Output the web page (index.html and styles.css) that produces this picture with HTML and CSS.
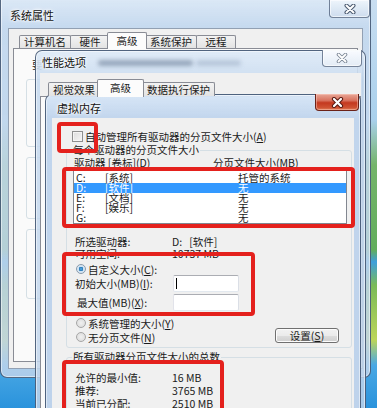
FILE: index.html
```html
<!DOCTYPE html>
<html lang="zh-CN">
<head>
    <meta charset="UTF-8">
    <meta name="viewport" content="width=device-width, initial-scale=1.0">
    <title>虚拟内存</title>
    <link rel="stylesheet" href="styles.css">
</head>
<body>
<div class="desktop">

    <!-- 系统属性 -->
    <div class="win win-sys">
        <div class="titlebar">
            <span class="title">系统属性</span>
            <span class="close close-sys">
                <svg width="12" height="10" viewBox="0 0 12 10"><path d="M2.5 1.5 L9.5 8.5 M9.5 1.5 L2.5 8.5" stroke="#4a5a70" stroke-width="4" stroke-linecap="round"/><path d="M2.5 1.5 L9.5 8.5 M9.5 1.5 L2.5 8.5" stroke="#fff" stroke-width="2" stroke-linecap="round"/></svg>
            </span>
        </div>
        <div class="client">
            <div class="tabs">
                <span class="tab">计算机名</span>
                <span class="tab">硬件</span>
                <span class="tab active">高级</span>
                <span class="tab">系统保护</span>
                <span class="tab">远程</span>
            </div>
            <div class="tab-panel">
                <p class="note">要</p>
                <div class="ghost-group g1"></div>
                <div class="ghost-group g2"></div>
                <div class="ghost-group g3"></div>
            </div>
        </div>
    </div>

    <!-- 性能选项 -->
    <div class="win win-perf">
        <div class="titlebar">
            <span class="title">性能选项</span>
            <span class="glass-blur b1"></span>
            <span class="glass-blur b2"></span>
            <span class="close close-perf">
                <svg width="12" height="10" viewBox="0 0 12 10"><path d="M2.5 1.5 L9.5 8.5 M9.5 1.5 L2.5 8.5" stroke="#7b8796" stroke-width="3.6" stroke-linecap="round"/><path d="M2.5 1.5 L9.5 8.5 M9.5 1.5 L2.5 8.5" stroke="#fff" stroke-width="1.8" stroke-linecap="round"/></svg>
            </span>
        </div>
        <div class="client">
            <div class="tabs tabs-perf">
                <span class="tab">视觉效果</span>
                <span class="tab active">高级</span>
                <span class="tab">数据执行保护</span>
            </div>
            <div class="tab-panel"></div>
        </div>
    </div>

    <!-- 虚拟内存 -->
    <div class="win win-vm">
        <div class="titlebar">
            <span class="title">虚拟内存</span>
            <span class="close close-vm">
                <svg width="13" height="11" viewBox="0 0 13 11"><path d="M3 2 L10 9 M10 2 L3 9" stroke="#5a1a12" stroke-width="4.2" stroke-linecap="round"/><path d="M3 2 L10 9 M10 2 L3 9" stroke="#fff" stroke-width="2.2" stroke-linecap="round"/></svg>
            </span>
        </div>
        <div class="client vm-body">
            <div class="chk-row"><span class="checkbox"></span>自动管理所有驱动器的分页文件大小(<u>A</u>)</div>

            <fieldset class="group">
                <legend>每个驱动器的分页文件大小</legend>
                <div class="cols">
                    <span class="col-drive">驱动器 [卷标](<u>D</u>)</span>
                    <span>分页文件大小(MB)</span>
                </div>
                <ul class="drive-list">
                    <li><span class="d-letter">C:</span><span class="d-label">[系统]</span><span>托管的系统</span></li>
                    <li class="selected"><span class="d-letter">D:</span><span class="d-label">[软件]</span><span>无</span></li>
                    <li><span class="d-letter">E:</span><span class="d-label">[文档]</span><span>无</span></li>
                    <li><span class="d-letter">F:</span><span class="d-label">[娱乐]</span><span>无</span></li>
                    <li><span class="d-letter">G:</span><span class="d-label"></span><span>无</span></li>
                </ul>
                <div class="kv first"><span class="k">所选驱动器:</span><span>D:&nbsp;&nbsp;&nbsp;[软件]</span></div>
                <div class="kv"><span class="k">可用空间:</span><span>10737 MB</span></div>

                <div class="size-area">
                    <div class="size-opts">
                        <div class="opt opt-custom"><span class="radio checked"></span>自定义大小(<u>C</u>):</div>
                        <div class="field-row"><span class="field-label">初始大小(MB)(<u>I</u>):</span><span class="input"><span class="caret"></span></span></div>
                        <div class="field-row"><span class="field-label indent">最大值(MB)(<u>X</u>):</span><span class="input"></span></div>
                        <div class="opt opt-gap"><span class="radio"></span>系统管理的大小(<u>Y</u>)</div>
                        <div class="opt"><span class="radio"></span>无分页文件(<u>N</u>)</div>
                    </div>
                    <button class="btn">设置(<u>S</u>)</button>
                </div>
            </fieldset>

            <fieldset class="group group-total">
                <legend>所有驱动器分页文件大小的总数</legend>
                <div class="kv total first"><span class="k">允许的最小值:</span><span>16 MB</span></div>
                <div class="kv total"><span class="k">推荐:</span><span>3765 MB</span></div>
                <div class="kv total"><span class="k">当前已分配:</span><span>2510 MB</span></div>
            </fieldset>
        </div>
    </div>

    <!-- red annotation boxes -->
    <div class="mark mark-check"></div>
    <div class="mark mark-list"></div>
    <div class="mark mark-size"></div>
    <div class="mark mark-total"></div>

</div>
</body>
</html>
```

FILE: styles.css
```css
* {
    box-sizing: border-box;
}

body {
    margin: 0;
    font-family: "Noto Sans CJK SC", "Noto Sans", sans-serif;
    font-size: 10.5px;
    color: #1a1a1a;
    overflow: hidden;
}

u {
    text-decoration: underline;
}

.desktop {
    position: relative;
    width: 377px;
    height: 408px;
    overflow: hidden;
    background: linear-gradient(to bottom,
        #c9def1 0, #a9d0ec 120px, #74b46a 165px, #62ad5c 250px,
        #3d9edc 262px, #79ba58 285px, #bcd55a 340px, #4aa8e4 365px, #2a93dc 408px);
}

/* ---------- aero windows ---------- */
.win {
    position: absolute;
    border: 1px solid rgba(30, 50, 80, 0.7);
    border-radius: 7px 7px 0 0;
    background: linear-gradient(to bottom, rgba(222, 234, 247, 0.94), rgba(198, 217, 238, 0.88) 30px, rgba(192, 212, 235, 0.84));
    box-shadow: inset 0 0 0 1px rgba(255, 255, 255, 0.5);
    display: flex;
    flex-direction: column;
}

.titlebar {
    position: relative;
    display: flex;
    align-items: center;
    flex: none;
}

.title {
    font-size: 11px;
    color: #111;
    text-shadow: 0 0 5px #fff, 0 0 3px #fff, 0 0 2px #fff;
}

.close {
    position: absolute;
    top: -1px;
    display: flex;
    align-items: center;
    justify-content: center;
    border: 1px solid rgba(50, 70, 100, 0.65);
    border-top: none;
    border-radius: 0 0 4px 4px;
    background: linear-gradient(to bottom, rgba(240, 246, 252, 0.9), rgba(205, 220, 237, 0.9));
    box-shadow: inset 0 0 0 1px rgba(255, 255, 255, 0.6);
}

.client {
    flex: 1;
    border: 1px solid rgba(70, 95, 130, 0.55);
    background: #f0f0f0;
}

/* tabs */
.tabs {
    display: flex;
    align-items: flex-end;
    height: 16px;
    padding-left: 6px;
    position: relative;
    z-index: 1;
}

.tab {
    min-width: 40px;
    height: 13px;
    padding: 0 4px;
    line-height: 12px;
    text-align: center;
    border: 1px solid #898c95;
    border-bottom: none;
    border-radius: 2px 2px 0 0;
    background: linear-gradient(to bottom, #f3f3f3, #e3e3e3);
    margin-right: -1px;
    white-space: nowrap;
}

.tab.active {
    height: 17px;
    margin: 0 -2px -1px -2px;
    padding: 0 6px;
    line-height: 15px;
    background: #fcfcfc;
    position: relative;
    z-index: 2;
}

.tab-panel {
    flex: 1;
    border: 1px solid #898c95;
    background: #fafafa;
}

/* 系统属性 */
.win-sys {
    left: 0;
    top: -4px;
    width: 371px;
    height: 382px;
    border-radius: 0 0 7px 7px;
    padding: 0 7px 8px 7px;
}

.win-sys .titlebar {
    height: 31px;
    padding: 4px 0 0 2px;
}

.win-sys .client {
    display: flex;
    flex-direction: column;
    padding: 3px 4px 6px 4px;
}

.close-sys {
    left: 321px;
    width: 41px;
    height: 18px;
    top: 3px;
}

.note {
    margin: 10px 0 0 18px;
    line-height: 12px;
    white-space: nowrap;
}

.ghost-group {
    margin-left: 12px;
    width: 300px;
    border: 1px solid #d5dfe5;
    border-radius: 3px;
}

.g1 { margin-top: 8px; height: 68px; }
.g2 { margin-top: 10px; height: 62px; }
.g3 { margin-top: 10px; height: 70px; }

/* 性能选项 */
.win-perf {
    left: 35px;
    top: 50px;
    width: 331px;
    height: 380px;
    padding: 0 4px;
}

.win-perf .titlebar {
    height: 22px;
    padding-left: 2px;
}

.win-perf .client {
    display: flex;
    flex-direction: column;
    padding-top: 6px;
    border: none;
}

.tabs-perf {
    height: 17px;
    padding-left: 8px;
}

.tabs-perf .tab {
    height: 14px;
    line-height: 13px;
}

.tabs-perf .tab.active {
    height: 18px;
    line-height: 16px;
    min-width: 47px;
}

.close-perf {
    left: 282px;
    width: 40px;
    height: 17px;
    background: linear-gradient(to bottom, rgba(250, 252, 255, 0.95), rgba(228, 236, 245, 0.95));
}

.glass-blur {
    position: absolute;
    height: 6px;
    border-radius: 3px;
    filter: blur(2px);
}

.b1 {
    left: 58px;
    top: 9px;
    width: 95px;
    background: rgba(70, 90, 120, 0.45);
}

.b2 {
    left: 156px;
    top: 9px;
    width: 45px;
    background: rgba(110, 130, 160, 0.3);
}

/* 虚拟内存 */
.win-vm {
    left: 45px;
    top: 94px;
    width: 316px;
    height: 330px;
    padding: 0 6px;
    background: linear-gradient(to bottom, rgba(214, 229, 246, 0.97), rgba(190, 211, 236, 0.95) 24px, rgba(186, 208, 234, 0.95));
}

.win-vm .titlebar {
    height: 23px;
    padding: 2px 0 0 5px;
}

.close-vm {
    left: 263px;
    width: 44px;
    height: 17px;
    border-color: #6b2218;
    background: linear-gradient(to bottom, #e9a797 0, #d9735f 40%, #c4381f 55%, #cf5233 85%, #e0805a 100%);
    box-shadow: inset 0 0 0 1px rgba(255, 210, 200, 0.45);
}

.vm-body {
    padding-top: 12px;
    border: none;
}

.chk-row {
    display: flex;
    align-items: center;
    height: 12px;
    padding-left: 20px;
    white-space: nowrap;
}

.checkbox {
    width: 11px;
    height: 11px;
    margin-right: 2px;
    border: 1px solid #8e8f8f;
    background: linear-gradient(135deg, #dcdcdc, #f6f6f6);
    box-shadow: inset 0 0 0 1px #f4f4f4;
}

.group {
    margin: 2px 2px 0 14px;
    padding: 1px 5px 3px 7px;
    border: 1px solid #d5dfe5;
    border-radius: 3px;
    min-width: 0;
}

.group legend {
    padding: 0 1px;
    margin-left: -2px;
    line-height: 12px;
    white-space: nowrap;
}

.cols {
    display: flex;
    height: 12px;
    line-height: 12px;
    white-space: nowrap;
}

.col-drive {
    width: 139px;
}

.drive-list {
    list-style: none;
    margin: 1px -1px 0 -1px;
    padding: 2px 0 0 0;
    height: 54px;
    border: 1px solid #828790;
    background: #fff;
    overflow: hidden;
}

.drive-list li {
    display: flex;
    height: 10px;
    line-height: 10px;
    padding-left: 2px;
    white-space: nowrap;
}

.drive-list li.selected {
    background: #3399ff;
    color: #fff;
}

.d-letter {
    width: 29px;
}

.d-label {
    width: 133px;
}

.kv {
    display: flex;
    height: 12px;
    line-height: 12px;
    padding-left: 1px;
    white-space: nowrap;
}

.kv.first {
    margin-top: 12px;
}

.k {
    width: 97px;
}

.size-area {
    display: flex;
    justify-content: space-between;
    align-items: flex-end;
    margin-top: 4px;
}

.opt {
    display: flex;
    align-items: center;
    height: 14px;
    padding-left: 2px;
    white-space: nowrap;
}

.opt-custom {
    height: 10px;
}

.opt-gap {
    margin-top: 4px;
}

.radio {
    width: 10px;
    height: 10px;
    margin-right: 2px;
    border-radius: 50%;
    border: 1px solid #a6a6a6;
    background: radial-gradient(circle, #f0f0f0 0, #d8d8d8 100%);
}

.radio.checked {
    border-color: #8a9aab;
    background: radial-gradient(circle, #5cb0ec 0, #2778b6 35%, #cfe2f2 45%, #e6eef6 100%);
}

.field-row {
    display: flex;
    align-items: center;
    height: 19px;
    white-space: nowrap;
}

.field-label {
    width: 99px;
    padding-left: 1px;
}

.field-label.indent {
    padding-left: 3px;
}

.input {
    width: 66px;
    height: 17px;
    background: #fff;
    border: 1px solid #abadb3;
    border-color: #abadb3 #dbdfe6 #e3e9ef #e2e3ea;
    border-radius: 2px;
    display: flex;
    align-items: center;
    padding-left: 2px;
}

.caret {
    width: 1px;
    height: 11px;
    background: #000;
}

.btn {
    width: 64px;
    height: 15px;
    margin: 0 7px 1px 0;
    padding: 0;
    font-family: inherit;
    font-size: 10.5px;
    line-height: 12px;
    color: #1a1a1a;
    border: 1px solid #707070;
    border-radius: 3px;
    background: linear-gradient(to bottom, #f2f2f2 0, #ebebeb 50%, #dddddd 51%, #cfcfcf 100%);
    box-shadow: inset 0 0 0 1px #fcfcfc;
}

.group-total {
    margin-top: 3px;
    padding-bottom: 10px;
}

.kv.total {
    height: 13px;
    line-height: 13px;
}

.kv.total.first {
    margin-top: 7px;
}

/* ---------- red annotation boxes ---------- */
.mark {
    position: absolute;
    border: 4px solid #e4211d;
    border-radius: 4px;
}

.mark-check { left: 57px; top: 122px; width: 41px; height: 31px; }
.mark-list  { left: 62px; top: 167px; width: 293px; height: 61px; }
.mark-size  { left: 62px; top: 252px; width: 193px; height: 64px; }
.mark-total { left: 62px; top: 360px; width: 162px; height: 56px; }
```
